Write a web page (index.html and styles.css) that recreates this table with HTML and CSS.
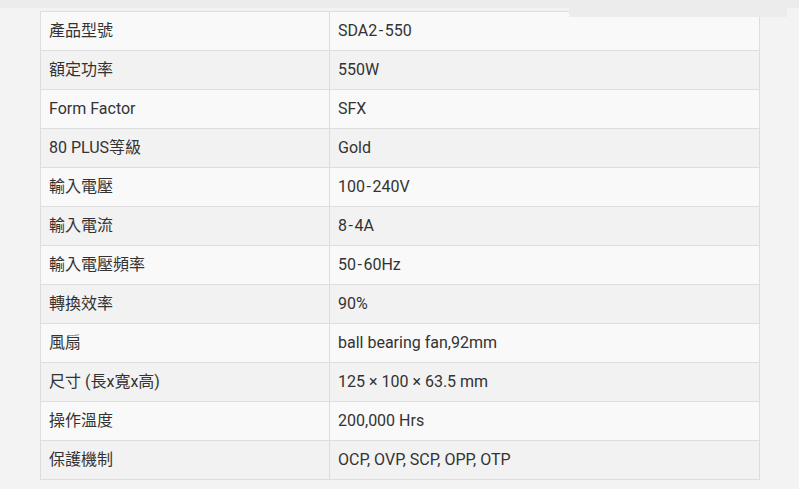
FILE: index.html
```html
<!DOCTYPE html>
<html lang="zh-Hant">
<head>
<meta charset="utf-8">
<link rel="stylesheet" href="styles.css">
</head>
<body>
<div class="topbar"></div>
<div class="tab-strip"></div>
<main class="content">
  <table class="spec">
    <tbody>
      <tr><td>產品型號</td><td>SDA2<span class="dash">-</span>550</td></tr>
      <tr><td>額定功率</td><td>550W</td></tr>
      <tr><td>Form Factor</td><td>SFX</td></tr>
      <tr><td>80 PLUS等級</td><td>Gold</td></tr>
      <tr><td>輸入電壓</td><td>100<span class="dash">-</span>240V</td></tr>
      <tr><td>輸入電流</td><td>8<span class="dash">-</span>4A</td></tr>
      <tr><td>輸入電壓頻率</td><td>50<span class="dash">-</span>60Hz</td></tr>
      <tr><td>轉換效率</td><td>90%</td></tr>
      <tr><td>風扇</td><td>ball bearing fan,92mm</td></tr>
      <tr><td>尺寸 (長x寬x高)</td><td>125 × 100 × 63.5 mm</td></tr>
      <tr><td>操作溫度</td><td>200,000 Hrs</td></tr>
      <tr><td>保護機制</td><td>OCP, OVP, SCP, OPP, OTP</td></tr>
    </tbody>
  </table>
</main>
</body>
</html>
```
FILE: styles.css
```css
html, body {
  margin: 0;
  padding: 0;
}
body {
  background: #f3f3f3;
  font-family: Roboto, "Noto Sans CJK TC", sans-serif;
  font-size: 16px;
  color: #333;
  position: relative;
  height: 489px;
  overflow: hidden;
}
.topbar {
  height: 8px;
  background: #ececec;
}
.tab-strip {
  position: absolute;
  left: 569px;
  top: 8px;
  width: 218px;
  height: 9px;
  background: #ececec;
  z-index: 2;
}
.content {
  padding: 3px 0 0 40px;
}
.spec {
  width: 720px;
  border-collapse: collapse;
  border: 1px solid #ddd;
}
.spec td {
  border: 1px solid #ddd;
  padding: 7px 8px 7px 8px;
  line-height: 24px;
  height: 24px;
  vertical-align: middle;
}
.spec td:first-child {
  width: 272px;
}
.spec tr:nth-child(odd) {
  background: #f9f9f9;
}
.spec tr:nth-child(even) {
  background: #f2f2f2;
}
.dash {
  margin: 0 1.5px;
}
```
